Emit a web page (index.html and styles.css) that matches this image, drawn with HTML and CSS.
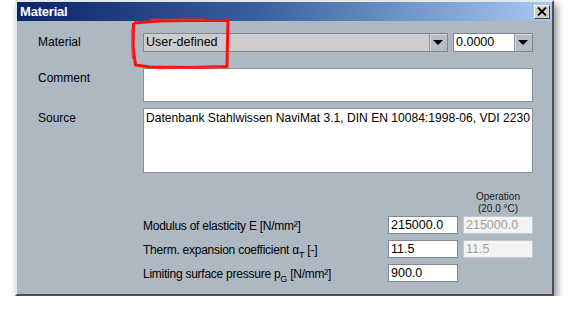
FILE: index.html
```html
<!DOCTYPE html>
<html lang="en">
	<head>
		<meta charset="UTF-8" />
		<title>Material</title>
		<link rel="stylesheet" href="styles.css">
	</head>
	<body>
		<div class="window">
			<div class="titlebar">
				<span class="title">Material</span>
				<span class="close">
					<svg width="10" height="9" viewBox="0 0 10 9">
						<path d="M1 0.5 L9 8.5 M9 0.5 L1 8.5" stroke="#000" stroke-width="1.8" />
					</svg>
				</span>
			</div>

			<div class="content">
				<div class="form">
					<div class="label">Material</div>
					<div class="combos">
						<div class="combo combo-main">
							<span class="combo-text">User-defined</span>
							<span class="arrow"></span>
						</div>
						<div class="combo combo-value">
							<span class="combo-text">0.0000</span>
							<span class="arrow"></span>
						</div>
					</div>

					<div class="label">Comment</div>
					<div class="textarea comment"></div>

					<div class="label">Source</div>
					<div class="textarea source">Datenbank Stahlwissen NaviMat 3.1, DIN EN 10084:1998-06, VDI 2230</div>
				</div>

				<div class="props">
					<div></div>
					<div></div>
					<div class="op-head">Operation<br />(20.0 °C)</div>

					<div class="prop-label">Modulus of elasticity E [N/mm²]</div>
					<div class="field">215000.0</div>
					<div class="field disabled">215000.0</div>

					<div class="prop-label">Therm. expansion coefficient α<sub>T</sub> [-]</div>
					<div class="field">11.5</div>
					<div class="field disabled">11.5</div>

					<div class="prop-label">Limiting surface pressure p<sub>G</sub> [N/mm²]</div>
					<div class="field">900.0</div>
					<div></div>
				</div>
			</div>

			<!-- red marker drawn over the screenshot -->
			<svg class="highlight" width="102" height="54" viewBox="0 0 102 54">
				<path d="M4 6 L30 4 L55 3.5 L98 3.5 L97.5 23 L97 49.5 L60 50.5 L20 50 L5.5 48 L3 30 L3.5 6" fill="none" stroke="#ff0d0d" stroke-width="3" stroke-linejoin="round" />
				<path d="M20 2.5 L75 2.2 M28 51.5 L92 50 M2 12 L2.5 42" fill="none" stroke="#ff2a2a" stroke-width="1.4" opacity="0.85" />
			</svg>
		</div>
	</body>
</html>
```

FILE: styles.css
```css
* {
	box-sizing: border-box;
	margin: 0;
	padding: 0;
}

body {
	font-family: "Liberation Sans", Arial, sans-serif;
	font-size: 12px;
	background-color: #ffffff;
	color: #000;
}

.window {
	position: relative;
	margin-left: 15px;
	width: 539px;
	height: 296px;
	background-color: #aeb8c2;
	border: 2px solid;
	border-color: #e4e8ec #4a4f55 #4a4f55 #e4e8ec;
	box-shadow: 3px 4px 7px rgba(0, 0, 0, 0.45);
	display: flex;
	flex-direction: column;
}

.titlebar {
	height: 19px;
	background: linear-gradient(to right, #0a246a 0%, #3a5f9e 45%, #a6caf0 100%);
	display: flex;
	align-items: center;
	justify-content: space-between;
	padding: 0 2px 0 3px;
}

.title {
	color: white;
	font-weight: bold;
	font-size: 13px;
	letter-spacing: -0.2px;
}

.close {
	width: 16px;
	height: 14px;
	background-color: #d4d0c8;
	border: 1px solid;
	border-color: #ffffff #404040 #404040 #ffffff;
	display: flex;
	align-items: center;
	justify-content: center;
}

.content {
	padding: 12px 19px 0 21px;
}

.form {
	display: grid;
	grid-template-columns: 105px 1fr;
	row-gap: 6px;
}

.label {
	line-height: 18px;
	padding-top: 1px;
}

.form .label:first-child {
	line-height: 19px;
	padding-top: 0;
	margin-bottom: 10px;
}

.combos {
	display: flex;
	gap: 5px;
	height: 19px;
}

.combo {
	display: flex;
	border: 1px solid #7d8893;
	height: 19px;
}

.combo-main {
	flex: 1;
	background-color: #cdcdcd;
}

.combo-value {
	width: 80px;
	background-color: #ffffff;
}

.combo-text {
	flex: 1;
	padding-left: 2px;
	line-height: 17px;
	font-size: 12.5px;
}

.arrow {
	width: 18px;
	background-color: #b4bdc6;
	border-left: 1px solid #8a949e;
	box-shadow: inset 1px 1px 0 #d3d9df;
	position: relative;
}

.arrow::after {
	content: "";
	position: absolute;
	left: 3px;
	top: 6px;
	border-left: 5px solid transparent;
	border-right: 5px solid transparent;
	border-top: 5px solid #000;
}

.textarea {
	background-color: #ffffff;
	border: 1px solid #87919b;
	padding: 1px 2px;
	line-height: 16px;
	font-size: 12.1px;
}

.comment {
	height: 34px;
}

.source {
	height: 65px;
}

.props {
	display: grid;
	grid-template-columns: 1fr 70px 70px;
	column-gap: 5px;
	grid-auto-rows: 24px;
	margin-top: 18px;
	padding-left: 105px;
}

.op-head {
	font-size: 10px;
	line-height: 12px;
	text-align: center;
	color: #1a1a1a;
	margin-bottom: -1px;
}

.prop-label {
	line-height: 18px;
	margin-top: 1px;
	padding-top: 1px;
	letter-spacing: -0.25px;
}

.prop-label sub {
	font-size: 9px;
	vertical-align: -4px;
	line-height: 0;
}

.field {
	height: 18px;
	margin-top: 1px;
	background-color: #ffffff;
	border: 1px solid #7f8992;
	padding-left: 2px;
	line-height: 16px;
	font-size: 12.5px;
}

.field.disabled {
	background-color: #f4f4f4;
	border-color: #c3c9cf;
	color: #a0a0a0;
}

.highlight {
	position: absolute;
	left: 113px;
	top: 15px;
}
```
